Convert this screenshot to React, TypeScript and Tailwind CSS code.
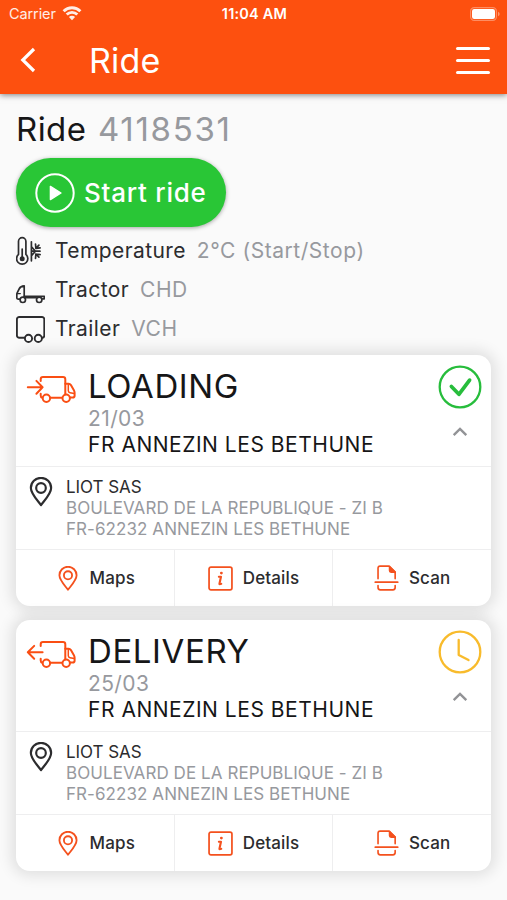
import type { ReactNode } from "react";

type Stop = {
  type: "loading" | "delivery";
  title: string;
  date: string;
  city: string;
  name: string;
  address: string[];
  done: boolean;
};

const stops: Stop[] = [
  {
    type: "loading",
    title: "LOADING",
    date: "21/03",
    city: "FR ANNEZIN LES BETHUNE",
    name: "LIOT SAS",
    address: ["BOULEVARD DE LA REPUBLIQUE - ZI B", "FR-62232 ANNEZIN LES BETHUNE"],
    done: true,
  },
  {
    type: "delivery",
    title: "DELIVERY",
    date: "25/03",
    city: "FR ANNEZIN LES BETHUNE",
    name: "LIOT SAS",
    address: ["BOULEVARD DE LA REPUBLIQUE - ZI B", "FR-62232 ANNEZIN LES BETHUNE"],
    done: false,
  },
];

function WifiIcon() {
  return (
    <svg width="20" height="15" viewBox="0 0 20 15" fill="none" stroke="currentColor" strokeWidth="2.9">
      <path d="M1.6 5.2a12 12 0 0 1 16.8 0" />
      <path d="M4.7 8.5a7.6 7.6 0 0 1 10.6 0" />
      <path d="M10 14.2 6.9 11.1a4.4 4.4 0 0 1 6.2 0z" fill="currentColor" stroke="none" />
    </svg>
  );
}

function BatteryIcon() {
  return (
    <svg width="30" height="14" viewBox="0 0 30 14" fill="none">
      <rect x="0.6" y="0.6" width="25.8" height="12.8" rx="3.6" stroke="#fff" strokeOpacity="0.35" strokeWidth="1.2" />
      <rect x="2" y="2" width="23" height="10" rx="2.2" fill="#fff" />
      <path d="M28 4.8c1.2.6 1.6 1.3 1.6 2.2s-.4 1.6-1.6 2.2z" fill="#fff" fillOpacity="0.4" />
    </svg>
  );
}

function TemperatureIcon() {
  return (
    <svg width="29" height="30" viewBox="0.5 0 29 30" fill="none" stroke="currentColor" strokeWidth="1.7" strokeLinecap="round" strokeLinejoin="round">
      <path d="M3 18.4V5.4a3.7 3.7 0 0 1 7.4 0v13a5.6 5.6 0 1 1-7.4 0z" />
      <path d="M6.7 13v8" />
      <circle cx="6.7" cy="22.8" r="2.5" fill="currentColor" stroke="none" />
      <path d="M15.9 5.8v19M15.9 15.2h8.6M16 10.8l4 4.4-4 4.4M20 8l.4 4.4 4.2-.6M20 22.4l.4-4.4 4.2.6M20.4 12.4l3-3.2M20.4 18l3 3.2" />
    </svg>
  );
}

function TractorIcon() {
  return (
    <svg width="29" height="30" viewBox="0.5 0 29 30" fill="none" stroke="currentColor" strokeWidth="1.7" strokeLinecap="round" strokeLinejoin="round">
      <path d="M4.2 24.2H2.8c-1 0-1.5-.5-1.5-1.5v-3c0-.9.2-1.6.6-2.4l2-3.8c.8-1.6 2.2-2.4 4.8-2.6v10.6" />
      <path d="M1.8 18.6h3" strokeWidth="1.3" />
      <path d="M8.7 21.4h20.1v2.4h-1.6" />
      <path d="M9.8 22.4h10.4" strokeWidth="2.4" />
      <circle cx="7.3" cy="24.8" r="2.7" />
      <circle cx="23.7" cy="24.8" r="2.7" />
    </svg>
  );
}

function TrailerIcon() {
  return (
    <svg width="29" height="30" viewBox="0.5 0 29 30" fill="none" stroke="currentColor" strokeWidth="1.9" strokeLinecap="round" strokeLinejoin="round">
      <path d="M9.2 23.8H3.8a2.4 2.4 0 0 1-2.4-2.4V5.4A2.4 2.4 0 0 1 3.8 3h22.6a2.4 2.4 0 0 1 2.4 2.4v16a2.4 2.4 0 0 1-2 2.4" />
      <circle cx="13" cy="24.4" r="3.6" />
      <circle cx="22.8" cy="24.4" r="3.6" />
    </svg>
  );
}

function TruckIcon({ type }: { type: Stop["type"] }) {
  return (
    <svg width="50" height="30" viewBox="0 0 50 30" fill="none" stroke="#fa4e13" strokeWidth="2" strokeLinecap="round" strokeLinejoin="round">
      {type === "loading" ? (
        <path d="M1.8 13.3h14.8M10.4 6.9l6.2 6.4-6.2 6.4" />
      ) : (
        <path d="M16.6 13.3H1.8M8.2 6.9 1.8 13.3l6.4 6.4" />
      )}
      <path d="M14.7 7V5.2c0-1.5.8-2.3 2.3-2.3h20c1.5 0 2.3.8 2.3 2.3v15" />
      <path d="M14.7 19.8v1.6c0 1.4.5 2 1.6 2.3" />
      <path d="M24.6 23.7h11.2" />
      <path d="M39.3 9.8h3.3c1 0 1.7.4 2.3 1.3l3 5.2c.5.9.7 1.5.7 2.4v3.1c0 1.3-.6 1.8-1.9 1.8H44" />
      <path d="M42.3 10.6v6.2c0 1 .6 1.7 1.7 1.9l4.3.9" strokeWidth="1.5" />
      <circle cx="20.4" cy="24.3" r="3.7" />
      <circle cx="40.2" cy="24.3" r="3.7" />
    </svg>
  );
}

function PinIcon({ className }: { className: string }) {
  return (
    <svg className={className} viewBox="0 0 24 30" fill="none" stroke="currentColor" strokeWidth="2.2" strokeLinejoin="round">
      <path d="M12 28.6C8.2 23.4 1.7 17 1.7 11.2a10.3 10.3 0 0 1 20.6 0C22.3 17 15.8 23.4 12 28.6z" />
      <circle cx="12" cy="11.2" r="4.9" />
    </svg>
  );
}

function InfoIcon() {
  return (
    <svg width="25" height="25" viewBox="0 0 26 26" fill="none" stroke="#f4511e" strokeLinecap="round" strokeLinejoin="round">
      <rect x="1.1" y="1.1" width="23.8" height="23.8" rx="2" strokeWidth="1.8" />
      <circle cx="13.9" cy="7.4" r="1.5" fill="#f4511e" stroke="none" />
      <path d="M11.3 11.2h2.2l-1.6 7.2c-.1.6.3.8 1.9.2" strokeWidth="2.2" />
    </svg>
  );
}

function ScanIcon() {
  return (
    <svg width="25" height="26" viewBox="0 0 26 26" preserveAspectRatio="none" fill="none" stroke="#f4511e" strokeWidth="1.7" strokeLinecap="round" strokeLinejoin="round">
      <path d="M4.2 13.6V3.2c0-1.4.7-2.1 2.1-2.1h9.5l6.2 6v6.5" />
      <path d="M16.2 1.8v3.8c0 1 .5 1.5 1.5 1.5H22z" fill="#f4511e" />
      <path d="M1.3 17.2h23.4" />
      <path d="M4.2 20.6v2c0 1.5.8 2.3 2.3 2.3h13.2c1.5 0 2.3-.8 2.3-2.3v-2" />
    </svg>
  );
}

function StatusIcon({ done }: { done: boolean }) {
  return done ? (
    <svg width="44" height="44" viewBox="0 0 44 44" fill="none" stroke="#27bd3c" strokeLinecap="round" strokeLinejoin="round">
      <circle cx="22" cy="22" r="20.3" strokeWidth="2.3" />
      <path d="m13.4 21.4 7.5 7.9L31.6 15.1" strokeWidth="3.7" />
    </svg>
  ) : (
    <svg width="44" height="44" viewBox="0 0 44 44" fill="none" stroke="#f8bb2c" strokeLinecap="round" strokeLinejoin="round">
      <circle cx="22" cy="22" r="20.3" strokeWidth="2.3" />
      <path d="M20.7 10v15l9.8 5.1" strokeWidth="2.3" />
    </svg>
  );
}

function InfoRow({ icon, label, value }: { icon: ReactNode; label: string; value: string }) {
  return (
    <div className="flex h-[39px] items-center text-[21px] text-[#2c2c2e]">
      {icon}
      <span className="ml-[10px] tracking-[0.4px]">{label}</span>
      <span className="ml-[11px] tracking-[0.55px] text-[#97999e]">{value}</span>
    </div>
  );
}

function CardAction({ icon, label }: { icon: ReactNode; label: string }) {
  return (
    <button className="flex flex-1 items-center justify-center gap-[9px] text-[17px] font-medium tracking-[0.15px] text-[#2c2c2e]">
      <span className="flex w-[26px] justify-center">{icon}</span>
      <span className="pt-[2px]">{label}</span>
    </button>
  );
}

function StopCard({ stop }: { stop: Stop }) {
  return (
    <div className="flex h-[251px] flex-col rounded-[14px] bg-white shadow-[0_0_14px_5px_rgba(0,0,0,0.10)]">
      <div className="flex h-[112px] border-b border-[#eeeeef] pr-[9px] pl-[10px]">
        <div className="mt-[19px] w-[62px]">
          <TruckIcon type={stop.type} />
        </div>
        <div className="flex-1 whitespace-nowrap">
          <div className="mt-[11px] text-[33px] leading-[40px] tracking-[0.6px] text-[#161617]">{stop.title}</div>
          <div className="text-[21px] leading-[26px] tracking-[0.4px] text-[#97999e]">{stop.date}</div>
          <div className="text-[21px] leading-[25px] tracking-[0.52px] text-[#161617]">{stop.city}</div>
        </div>
        <div className="flex w-11 flex-col items-center pt-[9.5px]">
          <StatusIcon done={stop.done} />
          <svg className="mt-[17.5px]" width="16" height="12" viewBox="0 0 16 12" fill="none" stroke="#929396" strokeWidth="2.4">
            <path d="m1.7 9.2 6.3-6.3 6.3 6.3" />
          </svg>
        </div>
      </div>
      <div className="flex h-[83px] border-b border-[#eeeeef] pt-[10px] pl-[13px]">
        <PinIcon className="h-[29.5px] w-6 text-[#2c2c2e]" />
        <div className="ml-[13px] text-[17px] leading-[21px] tracking-[0.07px] whitespace-nowrap">
          <div className="tracking-[-0.05px] text-[#2c2c2e]">{stop.name}</div>
          {stop.address.map((line) => (
            <div key={line} className="text-[#97999e]">
              {line}
            </div>
          ))}
        </div>
      </div>
      <div className="flex flex-1 divide-x divide-[#eeeeef]">
        <CardAction icon={<PinIcon className="h-[25px] w-5 text-[#f4511e]" />} label="Maps" />
        <CardAction icon={<InfoIcon />} label="Details" />
        <CardAction icon={<ScanIcon />} label="Scan" />
      </div>
    </div>
  );
}

export default function App() {
  return (
    <div className="h-[900px] w-[507px] overflow-hidden bg-[#fafafa] font-['Inter',sans-serif]">
      <header className="relative h-[94px] bg-[#fd500f] text-white shadow-[0_1px_6px_rgba(0,0,0,0.5)]">
        <div className="grid h-[27px] grid-cols-3 items-center pr-[7px] pl-[9px] text-[14.5px]">
          <div className="flex items-center gap-[6px] text-white/90">
            <span className="tracking-[-0.1px]">Carrier</span>
            <WifiIcon />
          </div>
          <div className="text-center font-semibold tracking-[0.2px]">11:04 AM</div>
          <div className="flex justify-end">
            <BatteryIcon />
          </div>
        </div>
        <div className="flex h-[66px] items-center pr-[17px] pl-5">
          <svg width="16" height="26" viewBox="0 0 16 26" fill="none" stroke="#fff" strokeWidth="3.2">
            <path d="M14 2 2.8 13 14 24" />
          </svg>
          <h1 className="ml-[53px] text-[34px] tracking-[0.2px]">Ride</h1>
          <div className="ml-auto flex flex-col gap-[9px]">
            <span className="h-[3px] w-[34px] rounded-full bg-white" />
            <span className="h-[3px] w-[34px] rounded-full bg-white" />
            <span className="h-[3px] w-[34px] rounded-full bg-white" />
          </div>
        </div>
      </header>

      <main className="px-4 pt-[15px]">
        <h2 className="text-[33px] leading-[40px] tracking-[0.4px] text-[#161617]">
          Ride <span className="ml-[2px] tracking-[1.7px] text-[#97999e]">4118531</span>
        </h2>
        <button className="mt-[9px] flex h-[69px] w-[210px] items-center rounded-full bg-[#29c636] pl-[19px] text-[26px] font-medium text-white shadow-[0_1px_4px_rgba(0,0,0,0.35)]">
          <svg width="40" height="40" viewBox="0 0 40 40" fill="none">
            <circle cx="20" cy="20" r="18.7" stroke="#fff" strokeWidth="2" />
            <path d="M15.4 13.4v13.2l10.6-6.6z" fill="#fff" stroke="#fff" strokeWidth="1.4" strokeLinejoin="round" />
          </svg>
          <span className="ml-[9px] tracking-[0.75px] whitespace-nowrap">Start ride</span>
        </button>
        <div className="mt-[4px]">
          <InfoRow icon={<TemperatureIcon />} label="Temperature" value="2°C (Start/Stop)" />
          <InfoRow icon={<TractorIcon />} label="Tractor" value="CHD" />
          <InfoRow icon={<TrailerIcon />} label="Trailer" value="VCH" />
        </div>
        <div className="mt-[7px] flex flex-col gap-[14px]">
          {stops.map((stop) => (
            <StopCard key={stop.type} stop={stop} />
          ))}
        </div>
      </main>
    </div>
  );
}
